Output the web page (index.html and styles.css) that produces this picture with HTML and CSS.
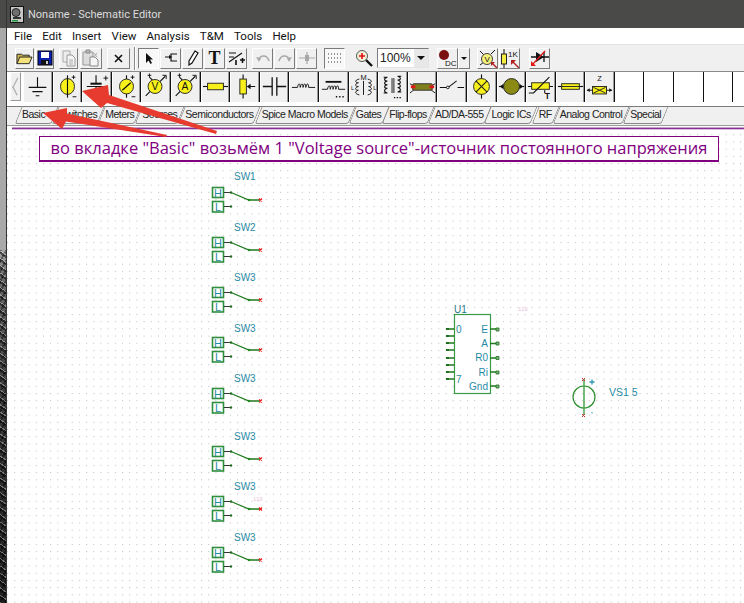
FILE: index.html
```html
<!DOCTYPE html>
<html lang="ru"><head>
    <meta charset="UTF-8">
    <title>Noname - Schematic Editor</title>
    <link rel="stylesheet" href="styles.css">
</head>
<body>

<div class="desktop"></div>

<div class="window">
    <div class="titlebar">
        <svg class="app-icon" width="14" height="17" viewBox="0 0 14 17"><rect x="0.500" y="0.500" width="13" height="16" fill="#c8c8c8" stroke="#111"/><circle cx="6" cy="6.500" r="4" fill="#6f6f6f" stroke="#222"/><path d="M3 11h8v2H3z" fill="#333"/><path d="M2 14h6v1.500H2z" fill="#1f9a3a"/></svg>
        <span>Noname - Schematic Editor</span>
    </div>

    <div class="menubar">
        <span>File</span><span>Edit</span><span>Insert</span><span>View</span><span>Analysis</span><span>T&amp;M</span><span>Tools</span><span>Help</span>
    </div>

    <div class="toolbar">
        <div class="tb-group">
            <div class="tb sm"><svg width="18" height="16" viewBox="0 0 18 16"><path d="M1 14V4h5l1 1h7v2" fill="#c9b24a" stroke="#222"/><path d="M1 14l3-7h13l-3 7z" fill="#f5e27a" stroke="#222"/></svg></div>
            <div class="tb sm"><svg width="16" height="16" viewBox="0 0 16 16"><rect x="1" y="1" width="14" height="14" fill="#0a1fb0" stroke="#000"/><rect x="4" y="2" width="8" height="6" fill="#fff"/><rect x="4" y="10" width="8" height="5" fill="#111"/><rect x="9" y="11" width="2" height="3" fill="#ccc"/></svg></div>
        </div>
        <div class="tb-group wide-gap">
            <div class="tb sm off"><svg width="16" height="17" viewBox="0 0 16 17"><path d="M2 1h7v11H2z" fill="#eee" stroke="#aaa"/><path d="M6 5h5l3 3v8H6z" fill="#f5f5f5" stroke="#999"/><path d="M8 10h4M8 12h4M8 14h4" stroke="#aaa"/></svg></div>
            <div class="tb off wide"><svg width="20" height="18" viewBox="0 0 20 18"><path d="M2 3h10v13H2z" fill="#ddd" stroke="#999"/><path d="M5 1h4v3H5z" fill="#bbb" stroke="#888"/><path d="M9 8h5l3 3v6H9z" fill="#f5f5f5" stroke="#888"/><path d="M13 4l3 4M16 4l-3 4" stroke="#aaa"/></svg></div>
        </div>
        <div class="tb-group">
            <div class="tb wider"><svg width="9" height="9" viewBox="0 0 9 9"><path d="M1 1l7 7M8 1L1 8" stroke="#111" stroke-width="1.600"/></svg></div>
        </div>
        <div class="tb-sep"></div>
        <div class="tb-group">
            <div class="tb on"><svg width="10" height="13" viewBox="0 0 10 13"><path d="M2 1v10l2.500-2.500L6.500 12l1.500-1-2-3.500h3z" fill="#111"/></svg></div>
            <div class="tb"><svg width="14" height="12" viewBox="0 0 14 12"><path d="M13 2H7v3H1M7 5v4h6" fill="none" stroke="#111" stroke-width="1.200"/><path d="M5 3l3 2-3 2z" fill="#111"/></svg></div>
            <div class="tb"><svg width="12" height="16" viewBox="0 0 12 16"><path d="M8 1l3 2-6 10-3 2 0-4z" fill="#fff" stroke="#111" stroke-width="1.200"/></svg></div>
            <div class="tb"><span class="tb-t">T</span></div>
            <div class="tb"><svg width="17" height="15" viewBox="0 0 17 15"><path d="M1 2h7M1 6h5M1 11l13-9" fill="none" stroke="#111" stroke-width="1.200"/><path d="M8 9v5M12 9h5M14.500 7v5" stroke="#111" stroke-width="1.600"/></svg></div>
        </div>
        <div class="tb-group">
            <div class="tb off"><svg width="14" height="10" viewBox="0 0 14 10"><path d="M3 7c1-5 8-6 10 1" fill="none" stroke="#a8a8a8" stroke-width="1.600"/><path d="M0 4l5 1-2 4z" fill="#a8a8a8"/></svg></div>
            <div class="tb off"><svg width="14" height="10" viewBox="0 0 14 10"><path d="M11 7C10 2 3 1 1 8" fill="none" stroke="#a8a8a8" stroke-width="1.600"/><path d="M14 4L9 5l2 4z" fill="#a8a8a8"/></svg></div>
            <div class="tb off"><svg width="16" height="12" viewBox="0 0 16 12"><path d="M0 6h16M8 0v12" stroke="#a8a8a8" stroke-width="1.200"/><path d="M6 3h4v6H6z" fill="#a8a8a8"/></svg></div>
        </div>
        <div class="tb-group ml-2">
            <div class="tb on grid"><svg width="14" height="11" viewBox="0 0 14 11"><path d="M0 1h14M0 5h14M0 9h14" stroke="#333" stroke-dasharray="1 2"/></svg></div>
        </div>
        <div class="tb-group ml-3">
            <div class="tb plain"><svg width="18" height="18" viewBox="0 0 18 18"><path d="M11 11l6 6" stroke="#111" stroke-width="2.400"/><circle cx="7" cy="7" r="5.500" fill="#f4f0d8" stroke="#555"/><path d="M4 7h6M7 4v6" stroke="#e01010" stroke-width="1.600"/></svg></div>
        </div>
        <div class="combo"><span class="combo-val">100%</span><span class="combo-btn"><i></i></span></div>
        <div class="tb-group tight ml-3">
            <div class="tb dc"><svg width="19" height="19" viewBox="0 0 19 19"><circle cx="6" cy="6" r="5" fill="#7a0f0f"/><text x="7" y="17" class="dc-text">DC</text></svg></div>
            <div class="tb narrow"><i class="arrow-down"></i></div>
        </div>
        <div class="tb-group ml-2">
            <div class="tb"><svg width="19" height="19" viewBox="0 0 19 19"><path d="M2 2l4 4M2 16l4-3M13 5l4-4" stroke="#111"/><circle cx="9" cy="10" r="5.500" fill="#f5f07a" stroke="#444"/><text x="6.500" y="13" class="ic-small">V</text><path d="M14 14l5 5" stroke="#b02020" stroke-width="1.400"/><path d="M13 13h4l-4 4z" fill="#b02020"/></svg></div>
            <div class="tb"><svg width="19" height="19" viewBox="0 0 19 19"><path d="M4 0v19" stroke="#111"/><rect x="1.500" y="5" width="5" height="10" fill="#f5ee40" stroke="#222"/><text x="8" y="8" class="ic-small">1K</text><path d="M13 13l6 6" stroke="#b02020" stroke-width="1.400"/><path d="M11 11h5l-5 5z" fill="#b02020"/></svg></div>
        </div>
        <div class="tb-group ml-4">
            <div class="tb"><svg width="19" height="18" viewBox="0 0 19 18"><path d="M1 8h18M14 3v10" stroke="#111" stroke-width="1.300"/><path d="M6 3l8 5-8 5z" fill="#111"/><path d="M2 16L15 2" stroke="#e01818" stroke-width="1.300"/><path d="M1 17v-5l5 5z" fill="#e01818"/></svg></div>
        </div>
    </div>

    <div class="parts">
        <div class="scroll-left"><i></i></div>
        <!-- ground -->
        <div class="part"><svg viewBox="0 0 29 28"><path d="M14.500 4v11M5 15h19M9 19.500h11M12.500 24h4" stroke="#111" stroke-width="1.200" fill="none"/></svg></div>
        <!-- voltage source -->
        <div class="part"><svg viewBox="0 0 29 28"><path d="M14.500 2v24" stroke="#111" stroke-width="1.200"/><ellipse cx="14.500" cy="14" rx="7.500" ry="8.500" fill="#f7f01a" stroke="#222"/><path d="M14.500 5v18" stroke="#111" stroke-width="1.200"/><path d="M19 4h4M21 2v4M20 25h4" stroke="#111"/></svg></div>
        <!-- battery -->
        <div class="part"><svg viewBox="0 0 29 28"><path d="M14 2v9M14 14v12M4 14h20" stroke="#111" stroke-width="1.200"/><path d="M8 11h12" stroke="#111" stroke-width="2.200"/><path d="M22 5h5M24.500 2.500v5" stroke="#111"/></svg></div>
        <!-- current gauge -->
        <div class="part"><svg viewBox="0 0 29 28"><path d="M14.500 2v24" stroke="#111" stroke-width="1.200"/><ellipse cx="14.500" cy="14" rx="7.500" ry="8" fill="#f7f01a" stroke="#222"/><path d="M10 18l9-8" stroke="#111" stroke-width="1.300"/><path d="M19 4h4M21 2v4M20 25h4" stroke="#111"/></svg></div>
        <!-- voltmeter -->
        <div class="part"><svg viewBox="0 0 29 28"><path d="M8 4l4 4M4 24l5-5M19 9l6-6" stroke="#111" stroke-width="1.200"/><path d="M22 2h4v4" fill="none" stroke="#111"/><path d="M6 2h4M8 0v4" stroke="#111"/><circle cx="14" cy="14" r="7.500" fill="#f7f01a" stroke="#222"/><text x="14" y="18" class="ic-letter">V</text></svg></div>
        <!-- ammeter -->
        <div class="part"><svg viewBox="0 0 29 28"><path d="M8 4l4 4M4 24l5-5M19 9l6-6" stroke="#111" stroke-width="1.200"/><path d="M22 2h4v4" fill="none" stroke="#111"/><path d="M6 2h4M8 0v4" stroke="#111"/><circle cx="14" cy="14" r="7.500" fill="#f7f01a" stroke="#222"/><text x="14" y="18" class="ic-letter">A</text></svg></div>
        <!-- resistor -->
        <div class="part"><svg viewBox="0 0 29 28"><path d="M1 14h27" stroke="#111" stroke-width="1.200"/><rect x="6" y="10.500" width="17" height="7" fill="#f7f01a" stroke="#222"/></svg></div>
        <!-- potentiometer -->
        <div class="part"><svg viewBox="0 0 29 28"><path d="M13 1v26M18 14h8" stroke="#111" stroke-width="1.200"/><rect x="9.500" y="6" width="7" height="16" fill="#f7f01a" stroke="#222"/><path d="M17 14l4-3v6z" fill="#111"/></svg></div>
        <!-- capacitor -->
        <div class="part"><svg viewBox="0 0 29 28"><path d="M2 14h10M17 14h10M12 4v20M17 4v20" stroke="#111" stroke-width="1.400"/></svg></div>
        <!-- inductor -->
        <div class="part"><svg viewBox="0 0 29 28"><path d="M2 15h6c1-5 3-5 3 0 1-5 3-5 3 0 1-5 3-5 3 0 1-5 3-5 3 0h7" stroke="#111" fill="none"/></svg></div>
        <!-- inductor with core -->
        <div class="part"><svg viewBox="0 0 29 28"><path d="M6 9h17" stroke="#111" stroke-width="2"/><path d="M2 17h6c1-5 3-5 3 0 1-5 3-5 3 0 1-5 3-5 3 0 1-5 3-5 3 0h7" stroke="#111" fill="none"/><path d="M17 25h1.500M20.500 25h1.500M24 25h1.500" stroke="#111" stroke-width="1.400"/></svg></div>
        <!-- coupled coils -->
        <div class="part"><svg viewBox="0 0 29 28"><text x="14.500" y="7" class="ic-small mid">M</text><path d="M10 6c-5 1-5 4-1 4-4 1-4 4 0 4-4 1-4 4 0 4-4 1-4 4 1 5M19 6c5 1 5 4 1 4 4 1 4 4 0 4 4 1 4 4 0 4 4 1 4 4-1 5" stroke="#111" fill="none"/><path d="M14.500 8v15" stroke="#111"/><text x="1" y="18" class="ic-tiny">L</text><text x="25" y="18" class="ic-tiny">L</text></svg></div>
        <!-- transformer -->
        <div class="part"><svg viewBox="0 0 29 28"><path d="M5 4h4c-4 1-4 4 0 4-4 1-4 4 0 4-4 1-4 4 0 4-4 1-4 4 0 5H5M24 3h-4c4 1 4 4 0 4 4 1 4 4 0 4 4 1 4 4 0 4 4 1 4 4 0 5h4" stroke="#111" fill="none" stroke-width="1.100"/><path d="M14 5v16M16 5v16" stroke="#111"/><path d="M16 26h1.500M19 26h1.500M22 26h1.500" stroke="#111" stroke-width="1.400"/></svg></div>
        <!-- delay line -->
        <div class="part"><svg viewBox="0 0 29 28"><path d="M1 11l5 3M1 21l5-4M23 14l5-3M23 17l5 4" stroke="#111"/><rect x="4" y="11" width="21" height="7" rx="1" fill="#7f7f1d" stroke="#333"/><path d="M2 13h5v3H2zM22 13h5v3h-5z" fill="#e01818"/></svg></div>
        <!-- switch -->
        <div class="part"><svg viewBox="0 0 29 28"><path d="M2 15h8M21 15h7M11 15l9-7" stroke="#111" stroke-width="1.100" fill="none"/><circle cx="10.500" cy="15" r="1.400" fill="#fff" stroke="#111"/></svg></div>
        <!-- lamp -->
        <div class="part"><svg viewBox="0 0 29 28"><path d="M14.500 1v26" stroke="#111" stroke-width="1.200"/><circle cx="14.500" cy="14" r="8.500" fill="#f7f01a" stroke="#222"/><path d="M8.500 8l12 12M20.500 8l-12 12" stroke="#222" stroke-width="1.200"/></svg></div>
        <!-- motor -->
        <div class="part"><svg viewBox="0 0 29 28"><path d="M1 14h27" stroke="#111" stroke-width="1.200"/><path d="M2 14l4-3v6zM27 14l-4-3v6z" fill="#111"/><circle cx="14.500" cy="14" r="8.500" fill="#8a8a14" stroke="#222"/></svg></div>
        <!-- varistor -->
        <div class="part"><svg viewBox="0 0 29 28"><path d="M1 14h27M19 18v3" stroke="#111" stroke-width="1.200"/><rect x="5" y="10" width="19" height="7" fill="#f7f01a" stroke="#222"/><path d="M2 21h5L24 4" stroke="#111" stroke-width="1.200" fill="none"/><text x="19" y="27" class="ic-bold">T</text></svg></div>
        <!-- fuse -->
        <div class="part"><svg viewBox="0 0 29 28"><path d="M1 14h27" stroke="#111" stroke-width="1.200"/><rect x="5" y="11" width="19" height="6" fill="#f7f01a" stroke="#222"/><path d="M5 14h19" stroke="#222"/></svg></div>
        <!-- impedance -->
        <div class="part"><svg viewBox="0 0 29 28"><text x="14.500" y="8" class="ic-small mid">Z</text><path d="M1 18h27" stroke="#111"/><path d="M1 18l3-2v4zM28 18l-3-2v4z" fill="#111"/><rect x="7" y="14" width="15" height="8" fill="#f7f01a" stroke="#222"/><path d="M8 15l13 6M8 21l13-6" stroke="#222"/></svg></div>
        <div class="part empty"></div>
        <div class="part empty"></div>
        <div class="part empty"></div>
        <div class="part empty"></div>
        <div class="part empty"></div>
    </div>

    <div class="tabs">
        <span class="tab active">Basic</span>
        <span class="tab">Switches</span>
        <span class="tab">Meters</span>
        <span class="tab">Sources</span>
        <span class="tab">Semiconductors</span>
        <span class="tab">Spice Macro Models</span>
        <span class="tab">Gates</span>
        <span class="tab">Flip-flops</span>
        <span class="tab">AD/DA-555</span>
        <span class="tab">Logic ICs</span>
        <span class="tab">RF</span>
        <span class="tab">Analog Control</span>
        <span class="tab">Special</span>
    </div>

    <div class="canvas">
        <div class="note-line"></div>
        <div class="note">во вкладке "Basic" возьмём 1 "Voltage source"-источник постоянного напряжения</div>

        <svg class="schematic" viewBox="7 128 737 475" width="737" height="475">
            <defs>
                <g id="sw">
                    <rect x="0.500" y="0.500" width="11" height="10" class="box"/>
                    <rect x="0.500" y="14.500" width="11" height="10.500" class="box"/>
                    <text x="6" y="9.500" class="lbl mid key">H</text>
                    <text x="6" y="24" class="lbl mid key">L</text>
                    <path d="M12 5.500h7M12 19.500h7" stroke="#333" fill="none"/>
                    <path d="M19 5.500L37 13h11" class="wire"/>
                    <circle cx="19" cy="5.500" r="1.200" fill="#1f6f1f"/>
                    <circle cx="19" cy="19.500" r="1.200" fill="#1f6f1f"/>
                    <circle cx="37" cy="13" r="1.200" fill="#1f8a1f"/>
                    <path d="M47 11.500l3 3M50 11.500l-3 3" stroke="#f01818" stroke-width="1.200"/>
                </g>
            </defs>

            <text x="234" y="180" class="lbl">SW1</text><use href="#sw" x="212" y="187"/>
            <text x="234" y="231" class="lbl">SW2</text><use href="#sw" x="212" y="237"/>
            <text x="234" y="281" class="lbl">SW3</text><use href="#sw" x="212" y="287"/>
            <text x="234" y="332" class="lbl">SW3</text><use href="#sw" x="212" y="337"/>
            <text x="234" y="382" class="lbl">SW3</text><use href="#sw" x="212" y="388"/>
            <text x="234" y="440" class="lbl">SW3</text><use href="#sw" x="212" y="446"/>
            <text x="234" y="490" class="lbl">SW3</text><use href="#sw" x="212" y="496"/>
            <text x="234" y="541" class="lbl">SW3</text><use href="#sw" x="212" y="547"/>
            <text x="253" y="501" class="ghost">119</text>

            <!-- U1 -->
            <text x="454" y="313" class="lbl dark">U1</text>
            <rect x="454.500" y="314.500" width="36" height="79" class="chip"/>
            <path d="M447 329h7M447 336h7M447 343h7M447 350h7M447 358h7M447 365h7M447 372h7M447 379h7" class="wire"/>
            <path d="M446 328h3v2h-3zM446 335h3v2h-3zM446 342h3v2h-3zM446 349h3v2h-3zM446 357h3v2h-3zM446 364h3v2h-3zM446 371h3v2h-3zM446 378h3v2h-3z" fill="#1f6f1f"/>
            <path d="M490 329h8M490 343.500h8M490 358h8M490 372h8M490 386h8" class="wire"/>
            <path d="M496 328h3v3h-3zM496 342h3v3h-3zM496 356.500h3v3h-3zM496 371h3v3h-3zM496 385h3v3h-3z" fill="#7fb07f" stroke="#1f6f1f" stroke-width="0.800"/>
            <text x="456" y="333" class="lbl">0</text>
            <text x="456" y="383" class="lbl">7</text>
            <text x="488" y="333" class="lbl end">E</text>
            <text x="488" y="347" class="lbl end">A</text>
            <text x="488" y="361" class="lbl end">R0</text>
            <text x="488" y="376" class="lbl end">Ri</text>
            <text x="488" y="390" class="lbl end">Gnd</text>
            <text x="518" y="311" class="ghost">119</text>

            <!-- VS1 -->
            <circle cx="584" cy="397" r="11" fill="none" stroke="#2e8f2e" stroke-width="1.200"/>
            <path d="M584 379v36" stroke="#3f9f3f" stroke-width="1.400"/>
            <path d="M582 378l3 3M585 378l-3 3M582 414l3 3M585 414l-3 3" stroke="#d03030"/>
            <path d="M589.500 382h5M592 379.500v5" stroke="#2a98b0" stroke-width="1.300"/>
            <path d="M592 412v1.500" stroke="#2a98b0"/>
            <text x="609" y="396" class="lbl big">VS1 5</text>
        </svg>
    </div>

    <svg class="arrows" viewBox="0 0 744 603" width="744" height="603">
        <polygon points="82,91 108,85 109,95 217,131 216,134 107,103 101,108" fill="#e63b2e"/>
        <polygon points="43,113 67,108 67,113.500 167,135 166,137 66,121.500 62,129" fill="#e63b2e"/>
    </svg>
</div>

</body></html>
```

FILE: styles.css
```css
html, body {
    margin: 0;
    padding: 0;
    height: 100%;
    overflow: hidden;
    background-color: #ffffff;
}

svg {
    display: block;
}

/* strip of desktop wallpaper on the left */
.desktop {
    position: absolute;
    left: 0;
    top: 0;
    width: 6px;
    height: 603px;
    background:
        repeating-linear-gradient(35deg, rgba(255,255,255,0.35) 0 1px, transparent 1px 4px, rgba(0,0,0,0.5) 4px 6px) left bottom / 100% 353px no-repeat,
        repeating-linear-gradient(-60deg, rgba(0,0,0,0.4) 0 2px, transparent 2px 5px) left bottom / 100% 353px no-repeat,
        linear-gradient(#4a4a48 0, #4a4a48 28px, #a9a9a9 28px, #a9a9a9 250px, #6a6a6a 275px, #3a3a3a 400px, #222222 603px);
    border-right: 1px solid #333333;
}

.window {
    position: absolute;
    left: 7px;
    top: 0;
    width: 737px;
    height: 603px;
    display: flex;
    flex-direction: column;
    font-family: "Liberation Sans", Arial, sans-serif;
    background-color: #ffffff;
}

.titlebar {
    height: 28px;
    background-color: #4a4a48;
    color: #dcdcdc;
    font-family: Roboto, sans-serif;
    font-size: 11px;
    display: flex;
    align-items: center;
    gap: 4px;
    padding-left: 3px;
    flex: none;
}

.menubar {
    height: 16px;
    display: flex;
    align-items: center;
    gap: 10.2px;
    padding-left: 7px;
    font-family: Roboto, sans-serif;
    font-size: 11.5px;
    color: #111111;
    flex: none;
}

.toolbar {
    height: 28px;
    background-color: #f0f0f0;
    border-top: 1px solid #e4e4e4;
    border-bottom: 1px solid #8a8a8a;
    box-sizing: border-box;
    display: flex;
    align-items: center;
    gap: 5px;
    padding-left: 8px;
    flex: none;
}

.tb-group {
    display: flex;
    gap: 1px;
}

.tb-group.wide-gap {
    gap: 2px;
}

.tb-group.tight {
    gap: 0;
}

.ml-2 {
    margin-left: 2px;
}

.ml-3 {
    margin-left: 3px;
}

.ml-4 {
    margin-left: 4px;
}

.tb {
    width: 21px;
    height: 21px;
    box-sizing: border-box;
    display: flex;
    align-items: center;
    justify-content: center;
    background-color: #f0f0f0;
    border: 1px solid;
    border-color: #ffffff #7c7c7c #7c7c7c #ffffff;
}

.tb.sm {
    width: 19px;
}

.tb.wide {
    width: 22px;
}

.tb.wider {
    width: 23px;
}

.tb.narrow {
    width: 12px;
}

.tb.on {
    border-color: #7c7c7c #ffffff #ffffff #7c7c7c;
    background-color: #f8f8f8;
}

.tb.plain {
    border-color: #f0f0f0;
}

.tb-sep {
    width: 1px;
    height: 23px;
    background-color: #8a8a8a;
    border-right: 1px solid #ffffff;
    margin-left: -1px;
    margin-right: -3px;
}

.tb-t {
    font-family: "Liberation Serif", serif;
    font-weight: bold;
    font-size: 18px;
    line-height: 18px;
    color: #111111;
}

.arrow-down {
    width: 0;
    height: 0;
    border-left: 3px solid transparent;
    border-right: 3px solid transparent;
    border-top: 3px solid #111111;
}

.combo {
    width: 52px;
    height: 20px;
    box-sizing: border-box;
    display: flex;
    background-color: #ffffff;
    border: 1px solid;
    border-color: #7c7c7c #e4e4e4 #e4e4e4 #7c7c7c;
    margin-left: -2px;
}

.combo-val {
    flex: 1;
    font-size: 12px;
    line-height: 18px;
    padding-left: 2px;
    color: #222222;
}

.combo-btn {
    width: 14px;
    display: flex;
    align-items: center;
    justify-content: center;
    background-color: #e8e8e8;
    border-left: 1px solid #ffffff;
}

.combo-btn i {
    border-left: 4px solid transparent;
    border-right: 4px solid transparent;
    border-top: 4px solid #111111;
}

.dc-text, .ic-small {
    font-family: "Liberation Sans", sans-serif;
    font-size: 8px;
    fill: #111111;
}

.ic-letter {
    font-family: "Liberation Sans", sans-serif;
    font-size: 11px;
    text-anchor: middle;
    fill: #111111;
}

.ic-tiny {
    font-family: "Liberation Sans", sans-serif;
    font-size: 6px;
    fill: #111111;
}

.ic-bold {
    font-family: "Liberation Sans", sans-serif;
    font-size: 9px;
    font-weight: bold;
    fill: #111111;
}

.mid {
    text-anchor: middle;
}

/* row of part buttons */
.parts {
    height: 31px;
    background-color: #ffffff;
    display: flex;
    align-items: stretch;
    flex: none;
    overflow: hidden;
}

.scroll-left {
    width: 11px;
    margin-left: 3px;
    margin-right: 2px;
    height: 29px;
    background-color: #f0f0f0;
    border: 1px solid;
    border-color: #ffffff #9a9a9a #9a9a9a #ffffff;
    box-sizing: border-box;
    display: flex;
    align-items: center;
    justify-content: center;
    flex: none;
}

.scroll-left i {
    width: 6px;
    height: 6px;
    border-left: 1px solid #b0b0b0;
    border-bottom: 1px solid #b0b0b0;
    transform: scaleY(2) rotate(45deg);
    margin-left: 3px;
}

.part {
    width: 29.6px;
    height: 30px;
    box-sizing: border-box;
    background-color: #f0f0f0;
    border-left: 1px solid #ffffff;
    border-right: 1px solid #111111;
    box-shadow: inset -1px 0 #9a9a9a;
    flex: none;
}

.part svg {
    width: 27px;
    height: 27px;
    margin-top: 1px;
}

.part.empty {
    background-color: #ffffff;
    border-left: none;
    box-shadow: none;
}

/* component tabs */
.tabs {
    height: 20px;
    margin-top: 3px;
    background-color: #f0f0f0;
    border-top: 1px solid #7c7c7c;
    border-bottom: 1px solid #9a9a9a;
    box-sizing: border-box;
    display: flex;
    padding-left: 11px;
    font-size: 10.5px;
    flex: none;
}

.tab {
    position: relative;
    padding: 0 4px;
    line-height: 15px;
    color: #222222;
    letter-spacing: -0.5px;
    white-space: nowrap;
    flex: none;
}

.tab::before {
    content: "";
    position: absolute;
    left: 0;
    right: 0;
    top: 0;
    height: 17px;
    border: 1px solid #8a8a8a;
    border-top: none;
    border-radius: 0 0 3px 3px;
    transform: skewX(-22deg);
    box-sizing: border-box;
}

.tab.active {
    padding-right: 10px;
}

/* schematic area */
.canvas {
    position: relative;
    flex: 1;
    margin-top: 2px;
    background-color: #ffffff;
    background-image: radial-gradient(circle at 0.5px 0.5px, #c0c0c0 0.6px, transparent 0.9px);
    background-size: 7.2px 7.2px;
    background-position: 0 6.3px;
}

.note-line {
    position: absolute;
    left: 5px;
    right: 0;
    top: 0;
    height: 1px;
    background-color: #8a2f95;
    box-shadow: 0 -1px #c8a0cc, 0 1px #d8c0dc;
}

.note {
    position: absolute;
    left: 32px;
    top: 8px;
    width: 680px;
    height: 26px;
    box-sizing: border-box;
    border: 1px solid #800080;
    border-bottom-width: 2px;
    background-color: #ffffff;
    color: #800080;
    font-family: "Open Sans", sans-serif;
    font-weight: 500;
    font-size: 16.5px;
    line-height: 22px;
    text-align: center;
    white-space: nowrap;
}

.schematic {
    position: absolute;
    left: 0;
    top: 0;
}

.box {
    fill: #ffffff;
    stroke: #2e8f3e;
    stroke-width: 1.600;
}

.chip {
    fill: #ffffff;
    stroke: #3a9a46;
    stroke-width: 1.200;
}

.wire {
    fill: none;
    stroke: #1f7a1f;
    stroke-width: 1.300;
}

.lbl {
    font-family: "Liberation Sans", sans-serif;
    font-size: 10px;
    fill: #1f8aa4;
}

.lbl.key {
    font-size: 11px;
}

.lbl.dark {
    fill: #1f7a8a;
}

.lbl.big {
    font-size: 10.500px;
}

.lbl.end {
    text-anchor: end;
}

.ghost {
    font-family: "Liberation Sans", sans-serif;
    font-size: 6px;
    fill: #e6c4d8;
}

.arrows {
    position: absolute;
    left: -7px;
    top: 0;
    pointer-events: none;
}
```
